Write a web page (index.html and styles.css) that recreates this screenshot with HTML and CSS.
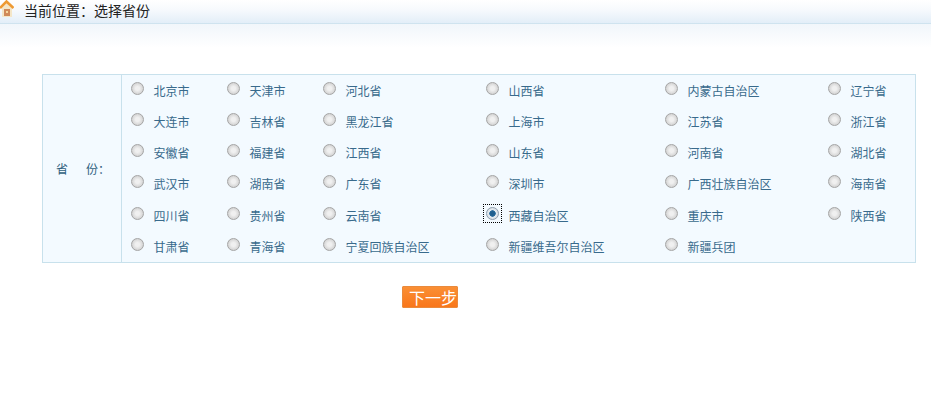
FILE: index.html
```html
<!DOCTYPE html>
<html lang="zh-CN">
<head>
<meta charset="utf-8">
<title>选择省份</title>
<link rel="stylesheet" href="styles.css">
</head>
<body>
<header class="crumb">
  <svg class="home" width="14" height="18" viewBox="0 0 14 18" aria-hidden="true">
    <path d="M2 8 L7 3 L12 8 L12 17 L2 17 Z" fill="#f4e6c8"/>
    <rect x="4" y="9" width="6" height="7" fill="#d08a5a"/>
    <rect x="6" y="11" width="2" height="2" fill="#f6d9a0"/>
    <path d="M0 8 L6.5 1.5 L13.5 8" fill="none" stroke="#ee9a33" stroke-width="2.6"/>
  </svg>
  <span class="crumb-text">当前位置&#xFF1A;选择省份</span>
</header>
<div class="fade"></div>
<main class="content">
  <table class="form">
    <colgroup>
      <col class="c-label"><col class="c1"><col class="c1"><col class="c3"><col class="c4"><col class="c3"><col>
    </colgroup>
    <tr>
      <th rowspan="6">省<span class="gap"></span>份&#xFF1A;</th>
      <td><label class="opt"><input type="radio" name="p"><span>北京市</span></label></td>
      <td><label class="opt"><input type="radio" name="p"><span>天津市</span></label></td>
      <td><label class="opt"><input type="radio" name="p"><span>河北省</span></label></td>
      <td><label class="opt"><input type="radio" name="p"><span>山西省</span></label></td>
      <td><label class="opt"><input type="radio" name="p"><span>内蒙古自治区</span></label></td>
      <td><label class="opt"><input type="radio" name="p"><span>辽宁省</span></label></td>
    </tr>
    <tr>
      <td><label class="opt"><input type="radio" name="p"><span>大连市</span></label></td>
      <td><label class="opt"><input type="radio" name="p"><span>吉林省</span></label></td>
      <td><label class="opt"><input type="radio" name="p"><span>黑龙江省</span></label></td>
      <td><label class="opt"><input type="radio" name="p"><span>上海市</span></label></td>
      <td><label class="opt"><input type="radio" name="p"><span>江苏省</span></label></td>
      <td><label class="opt"><input type="radio" name="p"><span>浙江省</span></label></td>
    </tr>
    <tr>
      <td><label class="opt"><input type="radio" name="p"><span>安徽省</span></label></td>
      <td><label class="opt"><input type="radio" name="p"><span>福建省</span></label></td>
      <td><label class="opt"><input type="radio" name="p"><span>江西省</span></label></td>
      <td><label class="opt"><input type="radio" name="p"><span>山东省</span></label></td>
      <td><label class="opt"><input type="radio" name="p"><span>河南省</span></label></td>
      <td><label class="opt"><input type="radio" name="p"><span>湖北省</span></label></td>
    </tr>
    <tr>
      <td><label class="opt"><input type="radio" name="p"><span>武汉市</span></label></td>
      <td><label class="opt"><input type="radio" name="p"><span>湖南省</span></label></td>
      <td><label class="opt"><input type="radio" name="p"><span>广东省</span></label></td>
      <td><label class="opt"><input type="radio" name="p"><span>深圳市</span></label></td>
      <td><label class="opt"><input type="radio" name="p"><span>广西壮族自治区</span></label></td>
      <td><label class="opt"><input type="radio" name="p"><span>海南省</span></label></td>
    </tr>
    <tr>
      <td><label class="opt"><input type="radio" name="p"><span>四川省</span></label></td>
      <td><label class="opt"><input type="radio" name="p"><span>贵州省</span></label></td>
      <td><label class="opt"><input type="radio" name="p"><span>云南省</span></label></td>
      <td><label class="opt"><b class="ring"><input type="radio" name="p" checked></b><span>西藏自治区</span></label></td>
      <td><label class="opt"><input type="radio" name="p"><span>重庆市</span></label></td>
      <td><label class="opt"><input type="radio" name="p"><span>陕西省</span></label></td>
    </tr>
    <tr>
      <td><label class="opt"><input type="radio" name="p"><span>甘肃省</span></label></td>
      <td><label class="opt"><input type="radio" name="p"><span>青海省</span></label></td>
      <td><label class="opt"><input type="radio" name="p"><span>宁夏回族自治区</span></label></td>
      <td><label class="opt"><input type="radio" name="p"><span>新疆维吾尔自治区</span></label></td>
      <td><label class="opt"><input type="radio" name="p"><span>新疆兵团</span></label></td>
      <td></td>
    </tr>
  </table>
  <div class="actions"><button class="next" type="button">下一步</button></div>
</main>
</body>
</html>
```
FILE: styles.css
```css
html, body {
  margin: 0;
  padding: 0;
  background: #fff;
  overflow: hidden;
}
body {
  font-family: "Noto Sans CJK SC", "Liberation Sans", sans-serif;
  font-size: 12px;
}
.crumb {
  height: 23px;
  display: flex;
  align-items: flex-start;
  background: linear-gradient(#ffffff 0%, #f6f9fd 45%, #e3eef8 100%);
  border-bottom: 1px solid #cfe3ef;
  overflow: hidden;
}
.home {
  display: block;
  flex: none;
}
.crumb-text {
  margin-left: 10px;
  font-size: 14px;
  line-height: 20px;
  color: #222;
}
.fade {
  height: 24px;
  background: linear-gradient(#f1f6fb, #ffffff);
}
.content {
  padding: 26px 15px 0 42px;
}
.form {
  width: 874px;
  height: 189px;
  table-layout: fixed;
  border-collapse: separate;
  border-spacing: 0;
  background: #f3faff;
  border: 1px solid #c8e1ec;
}
.c-label { width: 79px; }
.c1 { width: 96px; }
.c3 { width: 163px; }
.c4 { width: 179px; }
.form th {
  font-weight: 400;
  color: #2f5f80;
  font-size: 12px;
  text-align: left;
  border-right: 1px solid #c8e1ec;
  padding: 0 0 0 13px;
  white-space: nowrap;
}
.gap {
  display: inline-block;
  width: 18px;
}
.form td {
  padding: 0;
  height: 31px;
  vertical-align: top;
}
.opt {
  display: flex;
  align-items: flex-start;
  padding: 7px 0 0 9px;
  color: #386a8c;
  line-height: 18px;
}
.opt span {
  margin-left: 9.5px;
  white-space: nowrap;
}
.opt input {
  appearance: none;
  -webkit-appearance: none;
  display: block;
  flex: none;
  width: 13px;
  height: 13px;
  margin: 0;
  border-radius: 50%;
  border: 1px solid #a5a5a5;
  box-sizing: border-box;
  background: radial-gradient(circle at 50% 50%, #f0f0f0 0 25%, #dedede 55%, #c2c2c2 100%);
}
.opt input:checked {
  border-color: #8c9cab;
  background: radial-gradient(circle at 50% 50%, #1f5f8f 0 25%, #2c6f9f 38%, #e6ecf1 45%, #cdd6de 100%);
}
.ring {
  display: block;
  flex: none;
  outline: 1px dotted #000;
  outline-offset: 2px;
}
.actions {
  padding: 23px 0 0 360px;
}
.next {
  display: block;
  width: 56px;
  height: 22px;
  padding: 0 0 0 6px;
  border: 1px solid #ea8a3c;
  border-radius: 1px;
  background: linear-gradient(#fa8f34, #f9761a);
  color: #fff;
  font: 16px/20px "Noto Sans CJK SC", sans-serif;
}
```
